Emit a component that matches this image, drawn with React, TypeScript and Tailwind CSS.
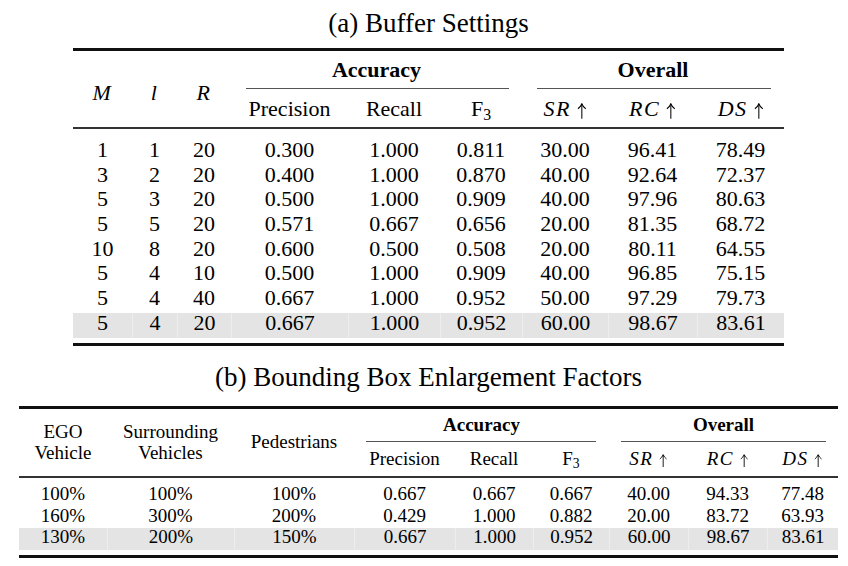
import type { ReactNode } from 'react';

const colsA = 'grid grid-cols-[59px_45px_54px_117px_92px_82px_86px_89px_87px]';
const colsB = 'grid grid-cols-[88px_127px_120px_101px_78px_76px_79px_79px_71px]';

const rowsA = [
  ['1', '1', '20', '0.300', '1.000', '0.811', '30.00', '96.41', '78.49'],
  ['3', '2', '20', '0.400', '1.000', '0.870', '40.00', '92.64', '72.37'],
  ['5', '3', '20', '0.500', '1.000', '0.909', '40.00', '97.96', '80.63'],
  ['5', '5', '20', '0.571', '0.667', '0.656', '20.00', '81.35', '68.72'],
  ['10', '8', '20', '0.600', '0.500', '0.508', '20.00', '80.11', '64.55'],
  ['5', '4', '10', '0.500', '1.000', '0.909', '40.00', '96.85', '75.15'],
  ['5', '4', '40', '0.667', '1.000', '0.952', '50.00', '97.29', '79.73'],
  ['5', '4', '20', '0.667', '1.000', '0.952', '60.00', '98.67', '83.61'],
];

const rowsB = [
  ['100%', '100%', '100%', '0.667', '0.667', '0.667', '40.00', '94.33', '77.48'],
  ['160%', '300%', '200%', '0.429', '1.000', '0.882', '20.00', '83.72', '63.93'],
  ['130%', '200%', '150%', '0.667', '1.000', '0.952', '60.00', '98.67', '83.61'],
];

function M({ children }: { children: ReactNode }) {
  return <span className="italic tracking-[1.5px]">{children}</span>;
}

// \uparrow, thin strokes with a slight descent below the baseline
function Arrow() {
  return (
    <svg viewBox="0 0 10 17" className="ml-[6px] inline-block h-[0.72em] w-[0.44em] align-[-0.15em]" fill="none" stroke="currentColor" strokeWidth="1.1">
      <path d="M5 17V1.2" />
      <path d="M0.8 6.2Q3.8 4 5 0.8Q6.2 4 9.2 6.2" />
    </svg>
  );
}

function Up({ children }: { children: ReactNode }) {
  return (
    <span className="whitespace-nowrap">
      <M>{children}</M>
      <Arrow />
    </span>
  );
}

function F3() {
  return (
    <span>
      F<span className="relative top-[0.28em] text-[0.72em] leading-none">3</span>
    </span>
  );
}

function DataRow({ cells, cols, cell, shaded }: { cells: string[]; cols: string; cell: string; shaded: boolean }) {
  return (
    <div className={cols}>
      {cells.map((c, i) => (
        <div
          key={i}
          className={`${cell} text-center ${shaded ? 'bg-[#e4e4e4]' : ''} ${shaded && i > 0 ? 'border-l border-[#eeeeee]' : ''}`}
        >
          {c}
        </div>
      ))}
    </div>
  );
}

export default function App() {
  return (
    <div className="flex flex-col items-center bg-white pl-[9px] pt-[10px] font-['Liberation_Serif',serif] text-black">
      <div className="h-[27px] text-[27px] leading-[27px]">(a) Buffer Settings</div>

      <div className="mt-[11px] w-[711px] border-y-[3px] border-[#111] text-[22px]">
        <div className={`${colsA} border-b-2 border-[#333]`}>
          <div className="row-span-2 flex items-center justify-center pt-[7px]"><M>M</M></div>
          <div className="row-span-2 flex items-center justify-center pt-[7px]"><M>l</M></div>
          <div className="row-span-2 flex items-center justify-center pt-[7px]"><M>R</M></div>
          <div className="col-span-3 flex flex-col">
            <div className="flex h-[37px] items-center justify-center font-bold">Accuracy</div>
            <div className="ml-[15px] mr-[13px] h-px bg-[#555]" />
          </div>
          <div className="col-span-3 flex flex-col">
            <div className="flex h-[37px] items-center justify-center font-bold">Overall</div>
            <div className="ml-[15px] mr-[13px] h-px bg-[#555]" />
          </div>
          <div className="flex h-[38px] items-center justify-center">Precision</div>
          <div className="flex h-[38px] items-center justify-center">Recall</div>
          <div className="flex h-[38px] items-center justify-center"><F3 /></div>
          <div className="flex h-[38px] items-center justify-center"><Up>SR</Up></div>
          <div className="flex h-[38px] items-center justify-center"><Up>RC</Up></div>
          <div className="flex h-[38px] items-center justify-center"><Up>DS</Up></div>
        </div>
        <div className="pb-[5.4px] pt-[11px]">
          {rowsA.map((r, i) => (
            <DataRow key={i} cells={r} cols={colsA} cell="h-[24.7px] leading-[20px]" shaded={i === rowsA.length - 1} />
          ))}
        </div>
      </div>

      <div className="mt-[18px] h-[27px] text-[27px] leading-[27px]">(b) Bounding Box Enlargement Factors</div>

      <div className="mt-[15px] w-[819px] border-y-[3px] border-[#111] text-[19px]">
        <div className={`${colsB} border-b-2 border-[#333]`}>
          <div className="row-span-2 flex flex-col items-center justify-center leading-[21px]">
            <span>EGO</span>
            <span>Vehicle</span>
          </div>
          <div className="row-span-2 flex flex-col items-center justify-center leading-[21px]">
            <span>Surrounding</span>
            <span>Vehicles</span>
          </div>
          <div className="row-span-2 flex items-center justify-center">Pedestrians</div>
          <div className="col-span-3 flex flex-col">
            <div className="flex h-[32px] items-center justify-center font-bold">Accuracy</div>
            <div className="ml-[12px] mr-[13px] h-px bg-[#555]" />
          </div>
          <div className="col-span-3 flex flex-col">
            <div className="flex h-[32px] items-center justify-center font-bold">Overall</div>
            <div className="ml-[12px] mr-[12px] h-px bg-[#555]" />
          </div>
          <div className="flex h-[34px] items-center justify-center">Precision</div>
          <div className="flex h-[34px] items-center justify-center">Recall</div>
          <div className="flex h-[34px] items-center justify-center"><F3 /></div>
          <div className="flex h-[34px] items-center justify-center"><Up>SR</Up></div>
          <div className="flex h-[34px] items-center justify-center"><Up>RC</Up></div>
          <div className="flex h-[34px] items-center justify-center"><Up>DS</Up></div>
        </div>
        <div className="pb-[5px] pt-[7.3px]">
          {rowsB.map((r, i) => (
            <DataRow key={i} cells={r} cols={colsB} cell="h-[21.6px] leading-[17.5px]" shaded={i === rowsB.length - 1} />
          ))}
        </div>
      </div>
    </div>
  );
}
